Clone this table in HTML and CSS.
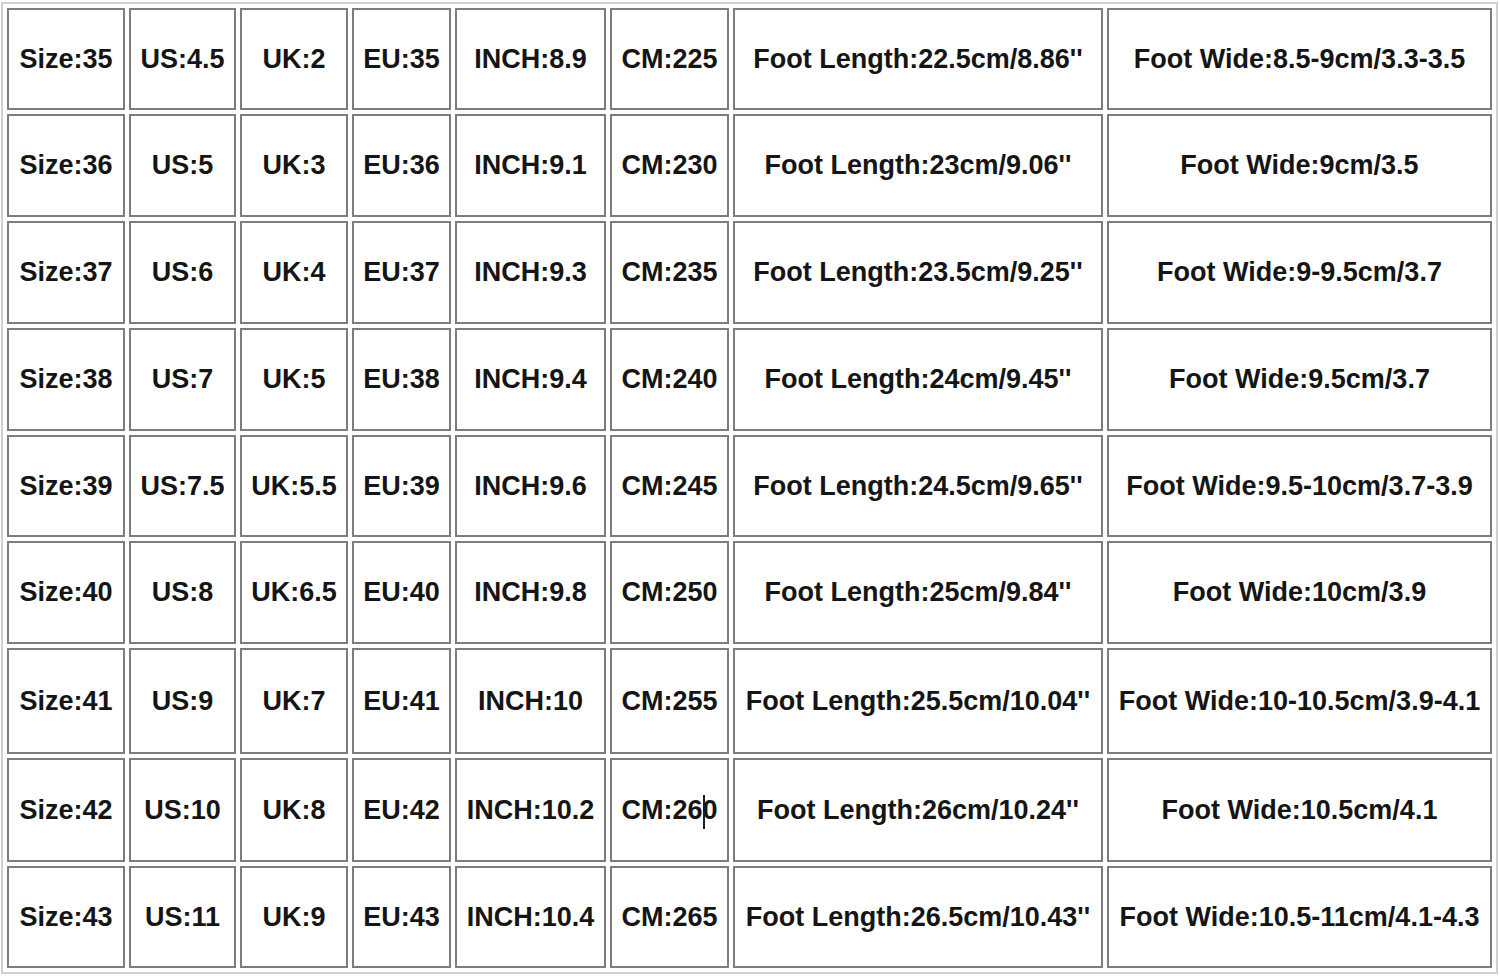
FILE: index.html
```html
<!DOCTYPE html>
<html>
<head>
<meta charset="utf-8">
<link rel="stylesheet" href="styles.css">
<title>Size Chart</title>
</head>
<body>
<div class="chart">
  <div class="cell">Size:35</div><div class="cell">US:4.5</div><div class="cell">UK:2</div><div class="cell">EU:35</div><div class="cell">INCH:8.9</div><div class="cell">CM:225</div><div class="cell">Foot Length:22.5cm/8.86''</div><div class="cell">Foot Wide:8.5-9cm/3.3-3.5</div>
  <div class="cell">Size:36</div><div class="cell">US:5</div><div class="cell">UK:3</div><div class="cell">EU:36</div><div class="cell">INCH:9.1</div><div class="cell">CM:230</div><div class="cell">Foot Length:23cm/9.06''</div><div class="cell">Foot Wide:9cm/3.5</div>
  <div class="cell">Size:37</div><div class="cell">US:6</div><div class="cell">UK:4</div><div class="cell">EU:37</div><div class="cell">INCH:9.3</div><div class="cell">CM:235</div><div class="cell">Foot Length:23.5cm/9.25''</div><div class="cell">Foot Wide:9-9.5cm/3.7</div>
  <div class="cell">Size:38</div><div class="cell">US:7</div><div class="cell">UK:5</div><div class="cell">EU:38</div><div class="cell">INCH:9.4</div><div class="cell">CM:240</div><div class="cell">Foot Length:24cm/9.45''</div><div class="cell">Foot Wide:9.5cm/3.7</div>
  <div class="cell">Size:39</div><div class="cell">US:7.5</div><div class="cell">UK:5.5</div><div class="cell">EU:39</div><div class="cell">INCH:9.6</div><div class="cell">CM:245</div><div class="cell">Foot Length:24.5cm/9.65''</div><div class="cell">Foot Wide:9.5-10cm/3.7-3.9</div>
  <div class="cell">Size:40</div><div class="cell">US:8</div><div class="cell">UK:6.5</div><div class="cell">EU:40</div><div class="cell">INCH:9.8</div><div class="cell">CM:250</div><div class="cell">Foot Length:25cm/9.84''</div><div class="cell">Foot Wide:10cm/3.9</div>
  <div class="cell">Size:41</div><div class="cell">US:9</div><div class="cell">UK:7</div><div class="cell">EU:41</div><div class="cell">INCH:10</div><div class="cell">CM:255</div><div class="cell">Foot Length:25.5cm/10.04''</div><div class="cell">Foot Wide:10-10.5cm/3.9-4.1</div>
  <div class="cell">Size:42</div><div class="cell">US:10</div><div class="cell">UK:8</div><div class="cell">EU:42</div><div class="cell">INCH:10.2</div><div class="cell">CM:26<span class="caret-wrap"><span class="caret"></span>0</span></div><div class="cell">Foot Length:26cm/10.24''</div><div class="cell">Foot Wide:10.5cm/4.1</div>
  <div class="cell">Size:43</div><div class="cell">US:11</div><div class="cell">UK:9</div><div class="cell">EU:43</div><div class="cell">INCH:10.4</div><div class="cell">CM:265</div><div class="cell">Foot Length:26.5cm/10.43''</div><div class="cell">Foot Wide:10.5-11cm/4.1-4.3</div>
</div>
</body>
</html>
```
FILE: styles.css
```css
html, body {
  margin: 0;
  padding: 0;
  background: #ffffff;
}

.chart {
  margin: 2px 1px 1px 1px;
  display: grid;
  grid-template-columns: 118px 107px 108px 99px 151px 119px 370px 385px;
  grid-template-rows: 102px 103px 103px 103px 102px 103px 106px 104px 102px;
  gap: 4px;
  padding: 4px;
  border: 2px solid #cfcfcf;
  width: max-content;
  font-family: "Liberation Sans", Arial, sans-serif;
  font-weight: bold;
  font-size: 27px;
  color: #151515;
}

.cell {
  box-sizing: border-box;
  border: 2px solid #7d7d7d;
  display: flex;
  align-items: center;
  justify-content: center;
  white-space: nowrap;
  background: #fff;
}

.caret-wrap {
  position: relative;
}

.caret {
  position: absolute;
  left: 1px;
  top: 0;
  width: 2px;
  height: 34px;
  background: #1a1a2a;
}
```
